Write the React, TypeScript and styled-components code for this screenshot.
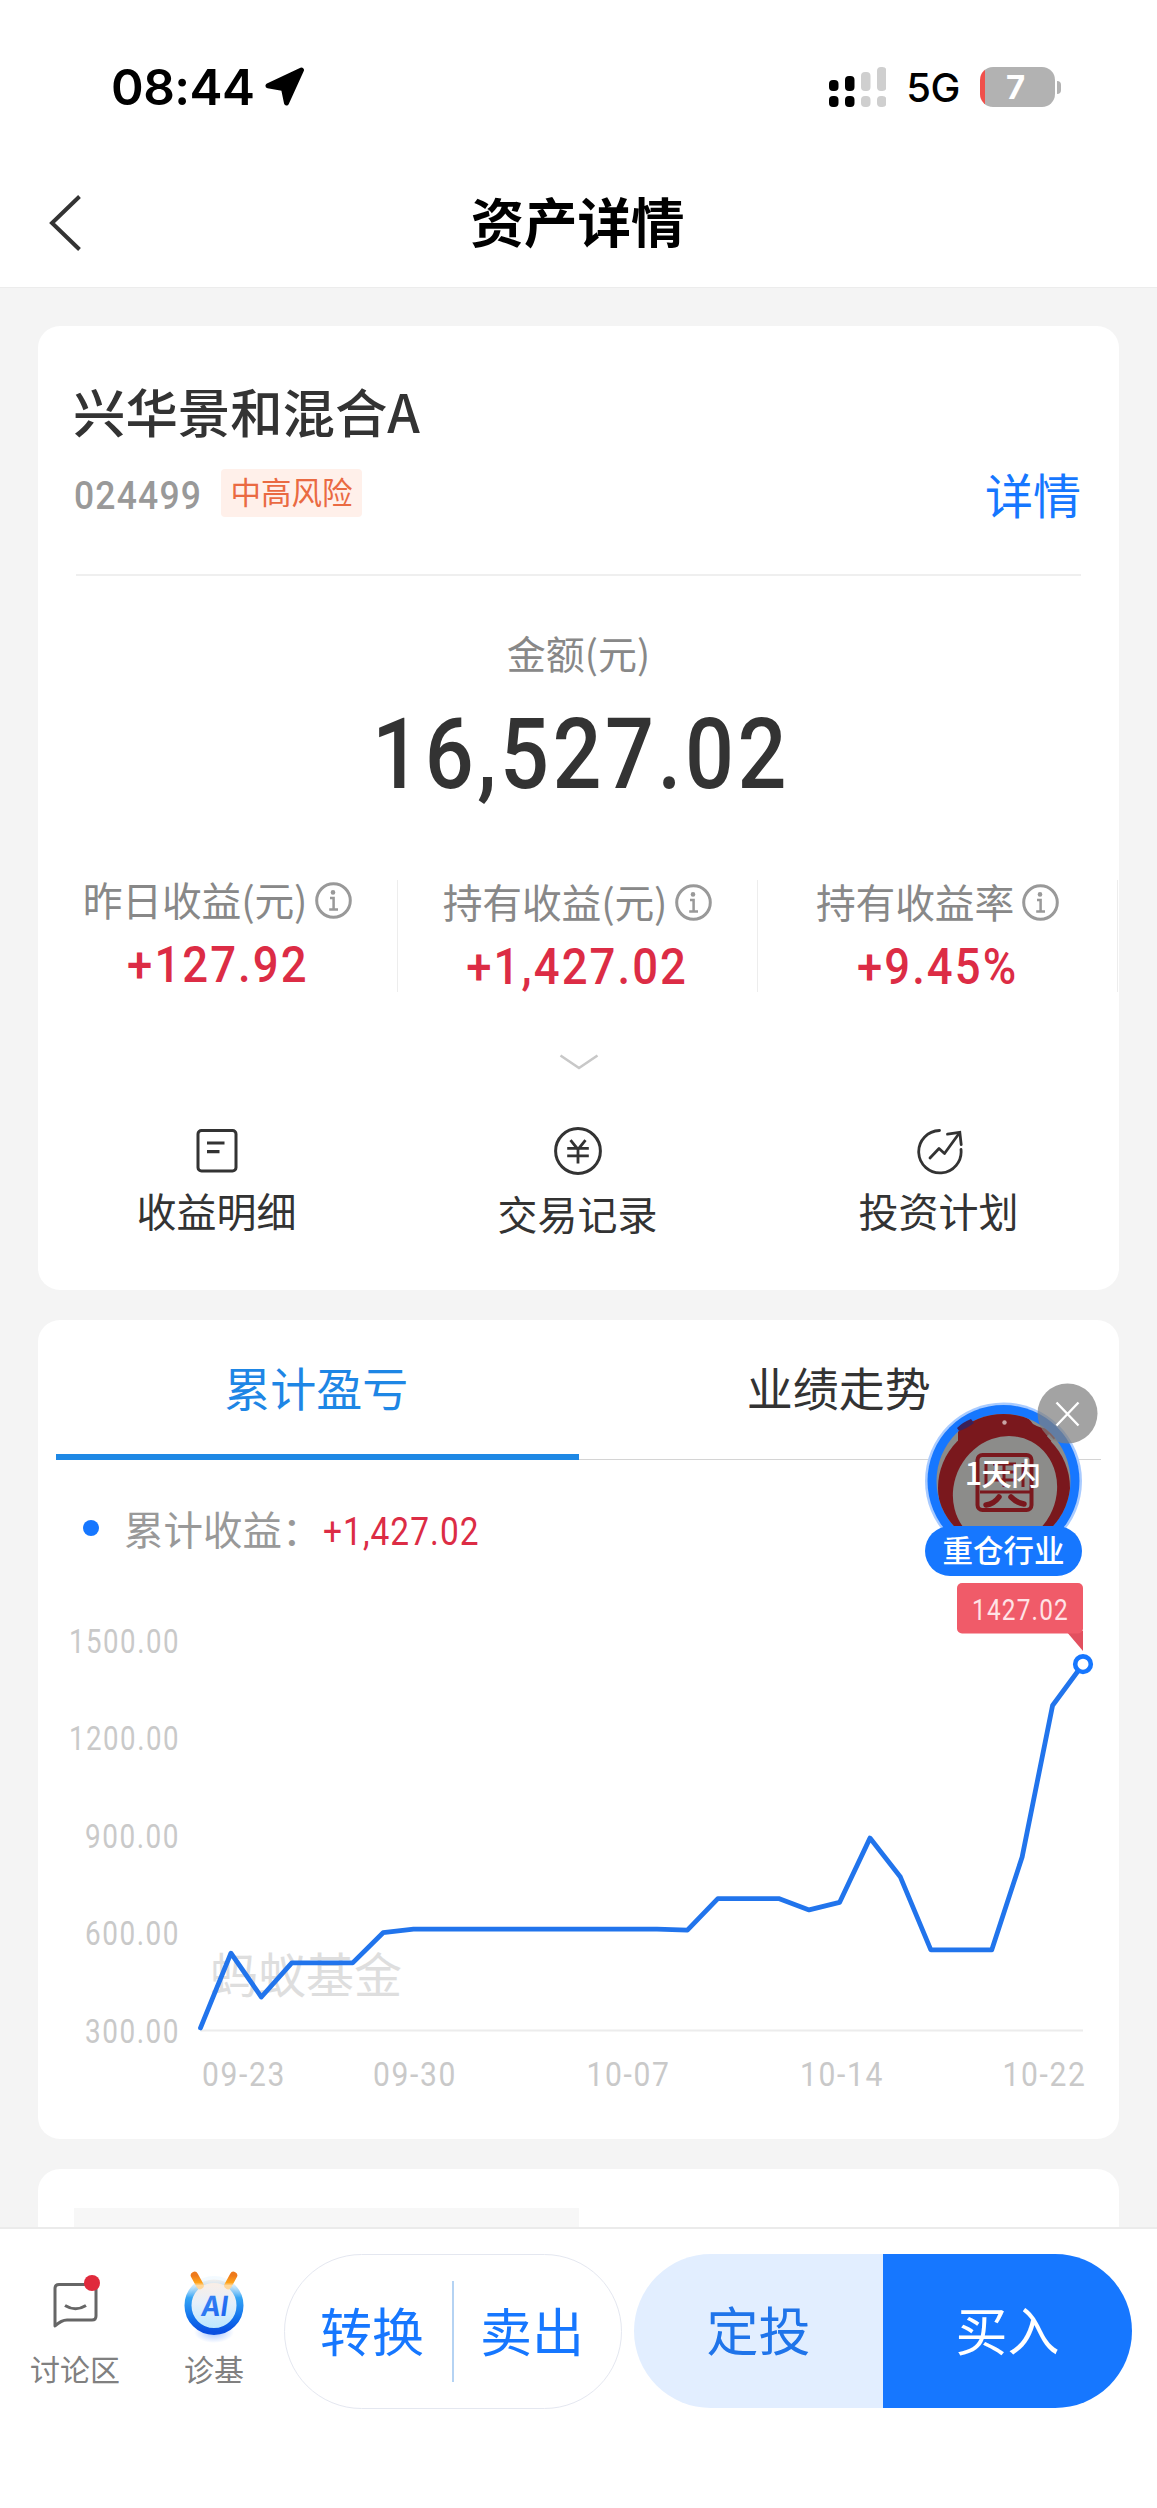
import React from 'react';
import styled, { createGlobalStyle } from 'styled-components';

const CJK = "'Noto Sans CJK SC', 'Noto Sans', sans-serif";
const NUM = "Roboto, 'Noto Sans CJK SC', sans-serif";
const SYS = "Inter, 'Liberation Sans', sans-serif";

const BLUE = '#1677ff';
const RED = '#dc2c45';

const GlobalStyle = createGlobalStyle`
  * { box-sizing: border-box; }
  body { margin: 0; background: #f4f4f4; }
`;

const Page = styled.div`
  position: relative;
  display: flex;
  flex-direction: column;
  width: 1157px;
  height: 2508px;
  overflow: hidden;
  background: #f4f4f4;
  font-family: ${CJK};
  color: #333;
  white-space: nowrap;
`;

/* ---------- header ---------- */

const Header = styled.header`
  flex: none;
  height: 288px;
  background: #fff;
  border-bottom: 1px solid #ececec;
`;

const StatusBar = styled.div`
  display: flex;
  align-items: center;
  justify-content: space-between;
  height: 158px;
  padding: 16px 96px 0 111px;
  font-family: ${SYS};
  color: #000;
`;

const StatusGroup = styled.div<{ $gap: number }>`
  display: flex;
  align-items: center;
  gap: ${p => p.$gap}px;
`;

const Clock = styled.span`
  font-size: 49.5px;
  font-weight: 600;
  line-height: 60px;
  letter-spacing: -0.5px;
`;

const Network = styled.span`
  margin-top: 2px;
  font-size: 40px;
  font-weight: 500;
  line-height: 44px;
  letter-spacing: -0.5px;
`;

const Battery = styled.div`
  display: flex;
  align-items: center;
  gap: 2px;
`;

const BatteryBody = styled.div`
  width: 75px;
  height: 40px;
  border-radius: 13px;
  background: linear-gradient(90deg, #f0504b 0 5px, #b2b2b2 5px);
  color: #fff;
  font-size: 33px;
  font-weight: 700;
  line-height: 41px;
  text-align: center;
  padding-right: 4px;
`;

const BatteryNub = styled.div`
  width: 4px;
  height: 13px;
  border-radius: 0 5px 5px 0;
  background: #b2b2b2;
`;

const NavBar = styled.div`
  display: grid;
  grid-template-columns: 100px 1fr 100px;
  align-items: center;
  height: 129px;
  padding: 0 24px;
`;

const NavTitle = styled.h1`
  margin: -6px 0 0 -2px;
  font-size: 53.5px;
  line-height: 70px;
  font-weight: 600;
  text-align: center;
  color: #000;
`;

const BackIcon = styled.svg`
  display: block;
  margin-left: 22px;
`;

/* ---------- cards ---------- */

const Main = styled.main`
  flex: 1;
  min-height: 0;
  display: flex;
  flex-direction: column;
  gap: 30px;
  padding: 38px 38px 0;
  overflow: hidden;
`;

const Card = styled.section<{ $height: number; $pad: number }>`
  flex: none;
  display: flex;
  flex-direction: column;
  height: ${p => p.$height}px;
  padding: 0 ${p => p.$pad}px;
  border-radius: 22px;
  background: #fff;
`;

const FundHead = styled.div`
  height: 250px;
  padding-top: 52px;
  border-bottom: 2px solid #efefef;
`;

const FundName = styled.h2`
  margin: 0 0 0 -3px;
  font-size: 52.4px;
  line-height: 64px;
  font-weight: 500;
`;

const FundMeta = styled.div`
  display: flex;
  align-items: center;
  height: 56px;
  margin-top: 23px;
`;

const FundCode = styled.span`
  margin: 5px 9px 0 -2px;
  width: 138px;
  font-family: ${NUM};
  font-size: 39px;
  line-height: 48px;
  font-weight: 500;
  letter-spacing: 1.3px;
  color: #999;
  transform: scaleX(0.91);
  transform-origin: left;
`;

const RiskTag = styled.span`
  width: 141px;
  height: 48px;
  border-radius: 4px;
  background: #fff0ea;
  color: #ea6a42;
  font-size: 30.5px;
  line-height: 45px;
  text-align: center;
`;

const DetailLink = styled.a`
  margin-left: auto;
  font-size: 48px;
  line-height: 56px;
  color: ${BLUE};
`;

const Amount = styled.div`
  padding-top: 52px;
  text-align: center;
`;

const AmountLabel = styled.div`
  font-size: 39px;
  line-height: 48px;
  color: #888;
`;

const AmountValue = styled.div`
  margin-top: 29px;
  padding-left: 6px;
  font-family: ${NUM};
  font-size: 98px;
  line-height: 100px;
  font-weight: 500;
  letter-spacing: 4px;
  transform: scaleX(0.88);
`;

const Stats = styled.div`
  display: grid;
  grid-template-columns: repeat(3, 360px);
  height: 109px;
  margin: 75px -38px 0;
`;

const Stat = styled.div<{ $drop?: number }>`
  display: flex;
  flex-direction: column;
  align-items: center;
  padding-top: ${p => p.$drop ?? 0}px;
  border-right: 1px solid #ededed;
`;

const StatLabel = styled.div`
  display: flex;
  align-items: center;
  gap: 8px;
  height: 41px;
  font-size: 39.8px;
  line-height: 40px;
  letter-spacing: -0.2px;
  color: #888;
`;

const StatText = styled.span`
  margin-top: -3px;
`;

const StatValue = styled.div`
  margin-top: 19px;
  font-family: ${NUM};
  font-size: 50.5px;
  line-height: 50px;
  font-weight: 500;
  letter-spacing: 2.3px;
  color: ${RED};
  transform: scaleX(0.9);
`;

const ExpandIcon = styled.svg`
  display: block;
  flex: none;
  align-self: center;
  margin-top: 65px;
`;

const Actions = styled.div`
  display: grid;
  grid-template-columns: repeat(3, 361px);
  margin: 56px -36px 0 -40px;
`;

const Action = styled.div<{ $drop?: number }>`
  display: flex;
  flex-direction: column;
  align-items: center;
  gap: ${p => 15 + (p.$drop ?? 0)}px;
  font-size: 40px;
  line-height: 40px;
`;

/* ---------- profit chart ---------- */

const Tabs = styled.div`
  display: grid;
  grid-template-columns: 1fr 1fr;
  flex: none;
  height: 140px;
`;

const Tab = styled.div<{ $active?: boolean }>`
  padding: 0 2px 6px 0;
  font-size: 46px;
  line-height: 133px;
  text-align: center;
  color: ${p => (p.$active ? '#1e86e5' : '#333')};
  box-shadow: inset 0 ${p => (p.$active ? '-6px #1e88e5' : '-1px #d4d4d4')};
`;

const Legend = styled.div`
  display: flex;
  align-items: center;
  flex: none;
  height: 60px;
  margin: 38px 0 0 27px;
`;

const LegendDot = styled.span`
  width: 16px;
  height: 16px;
  border-radius: 50%;
  background: ${BLUE};
`;

const LegendLabel = styled.span`
  width: 199px;
  margin-left: 25px;
  font-size: 39.5px;
  line-height: 58px;
  color: #999;
`;

const LegendValue = styled.span`
  margin-top: 7px;
  font-family: ${NUM};
  font-size: 38px;
  line-height: 46px;
  letter-spacing: 1.2px;
  color: ${RED};
  transform: scaleX(0.88);
  transform-origin: left;
`;

const ChartSvg = styled.svg`
  display: block;
  flex: none;
  overflow: visible;
`;

const AxisText = styled.text`
  font-family: ${NUM};
  font-size: 33px;
  font-weight: 400;
  letter-spacing: 1.8px;
  fill: #c9c9c9;
`;

const Watermark = styled.text`
  font-family: ${CJK};
  font-size: 48px;
  fill: #dedede;
`;

const TipText = styled.text`
  font-family: ${NUM};
  font-size: 30px;
  letter-spacing: 1.5px;
  fill: #ffe3e6;
`;

const Skeleton = styled.div`
  width: 505px;
  height: 60px;
  margin-top: 39px;
  background: #f7f7f7;
`;

/* ---------- floating badge ---------- */

const Floating = styled.div`
  position: absolute;
  left: 924px;
  top: 1382px;
  width: 176px;
  height: 196px;
`;

const FloatingLogo = styled.svg`
  position: absolute;
  left: 0;
  top: 19px;
`;

const FloatingTime = styled.span`
  position: absolute;
  left: 0;
  top: 70px;
  width: 157px;
  font-size: 30.5px;
  line-height: 40px;
  font-weight: 500;
  letter-spacing: -1px;
  text-align: center;
  color: #fff;
`;

const FloatingLabel = styled.span`
  position: absolute;
  left: 1px;
  top: 144px;
  width: 157px;
  height: 50px;
  border-radius: 25px;
  background: ${BLUE};
  color: #fff;
  font-size: 30.5px;
  line-height: 47px;
  font-weight: 500;
  text-align: center;
`;

const FloatingClose = styled.svg`
  position: absolute;
  left: 113px;
  top: 1px;
`;

/* ---------- footer ---------- */

const Footer = styled.footer`
  display: flex;
  align-items: flex-start;
  flex: none;
  height: 281px;
  padding: 25px 25px 0;
  border-top: 2px solid #ebebeb;
  background: #fff;
`;

const FooterLink = styled.div<{ $width: number; $left?: number }>`
  display: flex;
  flex-direction: column;
  align-items: center;
  flex: none;
  width: ${p => p.$width}px;
  margin: -1px 0 0 ${p => p.$left ?? 0}px;
  font-size: 30px;
  line-height: 28px;
  color: #808080;
`;

const AiText = styled.text`
  font-family: ${SYS};
  font-size: 28px;
  font-weight: 700;
`;

const OutlinePill = styled.div`
  display: flex;
  align-items: center;
  flex: none;
  width: 338px;
  height: 155px;
  margin-left: 40px;
  border: 1.5px solid #e4e7f0;
  border-radius: 78px;
  font-size: 52px;
  line-height: 60px;
  color: ${BLUE};
`;

const OutlineAction = styled.span<{ $left: number; $width: number }>`
  width: ${p => p.$width}px;
  margin: -4px 0 0 ${p => p.$left}px;
`;

const PillDivider = styled.span`
  width: 2px;
  height: 101px;
  background: #b5d3f3;
`;

const SolidPill = styled.div`
  display: grid;
  grid-template-columns: 1fr 1fr;
  flex: none;
  width: 498px;
  height: 154px;
  margin-left: 12px;
  border-radius: 77px;
  overflow: hidden;
`;

const SolidAction = styled.span<{ $primary?: boolean }>`
  padding-bottom: 4px;
  font-size: 52px;
  line-height: 150px;
  text-align: center;
  background: ${p => (p.$primary ? BLUE : '#e2eeff')};
  color: ${p => (p.$primary ? '#fff' : '#1f74ea')};
`;

const SIGNAL = [
  { x: 0, top: 13, color: '#000' },
  { x: 16, top: 9, color: '#000' },
  { x: 32, top: 5, color: '#cfcfcf' },
  { x: 48, top: 0, color: '#cfcfcf' },
];

const SignalIcon = () => (
  <svg width="57" height="40" viewBox="0 0 57 40">
    {SIGNAL.map(s => (
      <g key={s.x} fill={s.color}>
        <rect x={s.x} y={s.top} width="9.500" height={24 - s.top} rx="4" />
        <rect x={s.x} y="29" width="9.500" height="11" rx="4" />
      </g>
    ))}
  </svg>
);

const InfoIcon = () => (
  <svg width="37" height="37" viewBox="0 0 37 37" fill="none" stroke="#999" strokeWidth="3">
    <circle cx="18.5" cy="18.5" r="16.8" />
    <circle cx="18" cy="10.4" r="2.3" fill="#999" stroke="none" />
    <path d="M15 16h3.600v11.500M14.200 27.600h8.800" strokeWidth="2.500" />
  </svg>
);

const DocIcon = () => (
  <svg width="48" height="48" viewBox="0 0 48 48" fill="none" stroke="#333" strokeWidth="3">
    <rect x="5" y="3.500" width="38" height="40.500" rx="3.500" />
    <path d="M14 16h17.500M14 24.700h12.500" strokeWidth="3.200" />
  </svg>
);

const YenIcon = () => (
  <svg width="48" height="48" viewBox="0 0 48 48" fill="none" stroke="#333" strokeWidth="3">
    <circle cx="24" cy="24" r="22.400" />
    <path d="M16.500 13.200l7.500 9.300 7.500-9.300M24 22v14.500M13.200 21.300h21.600M13.200 28.800h21.600" strokeWidth="2.800" />
  </svg>
);

const TrendIcon = () => (
  <svg width="48" height="48" viewBox="0 0 48 48" fill="none" stroke="#333" strokeWidth="2.800" strokeLinecap="round">
    <path d="M24.500 3.500A21.200 21.200 0 1 0 46 22.500" />
    <path d="M15 31l9-9.500 5.500 5L44 6.500" strokeLinejoin="round" />
    <path d="M32.500 7.200L44.800 5.300 46.200 17.600" strokeLinejoin="miter" />
  </svg>
);

const DiscussIcon = () => (
  <svg width="100" height="101" viewBox="0 0 100 101" fill="none">
    <path
      d="M30 72.500V35.500q0-4 4-4h33q4 0 4 4v27.500q0 4-4 4H42q-5.500 0-12 6z"
      stroke="#666"
      strokeWidth="3"
      strokeLinejoin="round"
    />
    <path d="M40 52.500q10.500 6.500 21 0" stroke="#666" strokeWidth="3" />
    <circle cx="67" cy="30" r="8" fill="#e02a3c" />
  </svg>
);

const AiIcon = () => (
  <svg width="60" height="101" viewBox="0 0 60 101" fill="none">
    <defs>
      <linearGradient id="aiRing" x1="0" y1="0" x2="0" y2="1">
        <stop offset="0" stopColor="#d8efff" stopOpacity="0.3" />
        <stop offset="0.35" stopColor="#35a5f5" />
        <stop offset="0.75" stopColor="#1170ec" />
        <stop offset="1" stopColor="#0a4fe0" />
      </linearGradient>
      <linearGradient id="aiFace" x1="0" y1="0" x2="0" y2="1">
        <stop offset="0" stopColor="#fdeee2" />
        <stop offset="0.45" stopColor="#e6effa" />
        <stop offset="1" stopColor="#b5e6ff" />
      </linearGradient>
      <linearGradient id="aiHorn" x1="0" y1="0" x2="0" y2="1">
        <stop offset="0" stopColor="#ee7a1c" />
        <stop offset="0.7" stopColor="#ffa31a" />
        <stop offset="1" stopColor="#ffd79a" />
      </linearGradient>
      <linearGradient id="aiGlyph" x1="0" y1="0" x2="1" y2="1">
        <stop offset="0" stopColor="#3b8cf5" />
        <stop offset="1" stopColor="#1a5ff0" />
      </linearGradient>
      <radialGradient id="aiGlow">
        <stop offset="0" stopColor="#8db4ff" stopOpacity="0.8" />
        <stop offset="1" stopColor="#8db4ff" stopOpacity="0" />
      </radialGradient>
    </defs>
    <ellipse cx="30" cy="79" rx="20" ry="11" fill="url(#aiGlow)" />
    <circle cx="30" cy="52.500" r="26" fill="url(#aiFace)" stroke="url(#aiRing)" strokeWidth="7" />
    <path d="M10.500 22.500l5.500 10" stroke="url(#aiHorn)" strokeWidth="7.500" strokeLinecap="round" />
    <path d="M49.500 22.500l-5.500 10" stroke="url(#aiHorn)" strokeWidth="7.500" strokeLinecap="round" />
    <AiText
      x="-13.500"
      y="0"
      fill="url(#aiGlyph)"
      textLength="27"
      lengthAdjust="spacingAndGlyphs"
      transform="translate(29.500 63) skewX(-8)"
    >
      AI
    </AiText>
  </svg>
);

/* Cumulative profit per day, 09-22 to 10-22 */
const PROFIT = [
  308, 538, 403, 508, 508, 508, 601, 612, 612, 612, 612, 612, 612, 612, 612, 612, 609, 706, 706, 706,
  671, 694, 892, 772, 548, 548, 548, 834, 1300, 1427.02,
];
const Y_TICKS = [1500, 1200, 900, 600, 300];
const X_TICKS = [
  { label: '09-23', x: 146 },
  { label: '09-30', x: 317 },
  { label: '10-07', x: 530.5 },
  { label: '10-14', x: 744 },
  { label: '10-22', x: 946.5 },
];
const PLOT = { left: 144.5, right: 1027, base: 472.5, step: 97.5 };
const px = (i: number) => PLOT.left + ((PLOT.right - PLOT.left) * i) / (PROFIT.length - 1);
const py = (v: number) => PLOT.base - ((v - 300) / 300) * PLOT.step;

const ProfitChart = () => {
  const line = PROFIT.map((v, i) => `${px(i)},${py(v)}`).join(' ');
  const endX = px(PROFIT.length - 1);
  const endY = py(PROFIT[PROFIT.length - 1]);
  return (
    <ChartSvg width="1043" height="560" viewBox="0 0 1043 560">
      {Y_TICKS.map(v => (
        <AxisText
          key={v}
          x="124"
          y={py(v) + 12}
          textAnchor="end"
          textLength={v >= 1000 ? 111 : 95}
          lengthAdjust="spacingAndGlyphs"
        >
          {v.toFixed(2)}
        </AxisText>
      ))}
      <Watermark x="154" y="435">蚂蚁基金</Watermark>
      <path d={`M${PLOT.left} ${PLOT.base}H${PLOT.right}`} stroke="#ececec" strokeWidth="2" />
      {X_TICKS.map(t => (
        <AxisText key={t.label} x={t.x} y="528" textLength="84" lengthAdjust="spacingAndGlyphs">
          {t.label}
        </AxisText>
      ))}
      <polyline points={line} fill="none" stroke="#2174ec" strokeWidth="4.800" strokeLinejoin="round" strokeLinecap="round" />
      <circle cx={endX} cy={endY} r="7.800" fill="#fff" stroke={BLUE} strokeWidth="4.600" />
      <path d="M1010 73H1027V93z" fill="#e2505f" />
      <rect x="901" y="25" width="126" height="50.500" rx="5" fill="#f05b69" />
      <TipText x="916" y="62" textLength="97" lengthAdjust="spacingAndGlyphs">1427.02</TipText>
    </ChartSvg>
  );
};

const FundLogo = () => (
  <FloatingLogo width="159" height="159" viewBox="0 0 159 159" fill="none">
    <defs>
      <clipPath id="logoFace">
        <circle cx="79.500" cy="80" r="67" />
      </clipPath>
    </defs>
    <circle cx="79.500" cy="80" r="78.500" fill="#a9cbff" />
    <circle cx="79.500" cy="80" r="76" fill={BLUE} />
    <g clipPath="url(#logoFace)">
      <rect width="159" height="159" fill="#8c8c8a" />
      <circle cx="80" cy="87" r="66" fill="#7a181d" />
      <path d="M34 18q45-18 74-1 8 8 22 8l-8-20L79-2z" fill="#8c8c8a" />
      <path d="M34 22Q60 8 92 13q12 2 17 10 10 6 22 4l3 8-13 10Q75 20 34 60z" fill="#7a181d" />
      <ellipse cx="81" cy="90" rx="51" ry="56" transform="rotate(28 81 90)" fill="#8c8c8a" />
      <path d="M124 34l8 9" stroke="#8c8c8a" strokeWidth="3" />
    </g>
    <path d="M33 27q6-6 14-9l3 4q-8 6-15 8z" fill="#3b2058" />
    <circle cx="80.500" cy="21.500" r="2.200" fill="#c9a5a5" />
    <g stroke="#7a181d" strokeWidth="4" strokeLinejoin="round">
      <rect x="53.500" y="54" width="54" height="55" rx="5" />
      <path d="M62 62v24M99 62v24M69 63h23M69 71h23M69 79h23M80 62v24M56 91h50" strokeWidth="3" />
      <path d="M75 96q-5 7-13 8M87 96q6 6 13 7" strokeWidth="5.500" strokeLinecap="round" />
    </g>
  </FloatingLogo>
);

export default function App() {
  return (
    <>
      <GlobalStyle />
      <Page>
        <Header>
          <StatusBar>
            <StatusGroup $gap={10}>
              <Clock>08:44</Clock>
              <svg width="40" height="40" viewBox="0 0 40 40">
                <path
                  d="M36.500 3L21.500 36 18.500 21.500 3 18.700z"
                  fill="#000"
                  stroke="#000"
                  strokeWidth="5"
                  strokeLinejoin="round"
                />
              </svg>
            </StatusGroup>
            <StatusGroup $gap={20}>
              <SignalIcon />
              <Network>5G</Network>
              <Battery>
                <BatteryBody>7</BatteryBody>
                <BatteryNub />
              </Battery>
            </StatusGroup>
          </StatusBar>
          <NavBar>
            <BackIcon width="36" height="56" viewBox="0 0 36 56" fill="none" stroke="#333" strokeWidth="4">
              <path d="M33.500 1.500L6 28l27.500 26.500" />
            </BackIcon>
            <NavTitle>资产详情</NavTitle>
          </NavBar>
        </Header>

        <Main>
          <Card $height={964} $pad={38}>
            <FundHead>
              <FundName>兴华景和混合A</FundName>
              <FundMeta>
                <FundCode>024499</FundCode>
                <RiskTag>中高风险</RiskTag>
                <DetailLink>详情</DetailLink>
              </FundMeta>
            </FundHead>

            <Amount>
              <AmountLabel>金额(元)</AmountLabel>
              <AmountValue>16,527.02</AmountValue>
            </Amount>

            <Stats>
              <Stat>
                <StatLabel>
                  <StatText>昨日收益(元)</StatText>
                  <InfoIcon />
                </StatLabel>
                <StatValue>+127.92</StatValue>
              </Stat>
              <Stat $drop={2}>
                <StatLabel>
                  <StatText>持有收益(元)</StatText>
                  <InfoIcon />
                </StatLabel>
                <StatValue>+1,427.02</StatValue>
              </Stat>
              <Stat $drop={2}>
                <StatLabel>
                  <StatText>持有收益率</StatText>
                  <InfoIcon />
                </StatLabel>
                <StatValue>+9.45%</StatValue>
              </Stat>
            </Stats>

            <ExpandIcon width="40" height="17" viewBox="0 0 40 17" fill="none" stroke="#c8c8c8" strokeWidth="2.600">
              <path d="M1.500 1.500L20 14 38.500 1.500" />
            </ExpandIcon>

            <Actions>
              <Action>
                <DocIcon />
                收益明细
              </Action>
              <Action $drop={3}>
                <YenIcon />
                交易记录
              </Action>
              <Action>
                <TrendIcon />
                投资计划
              </Action>
            </Actions>
          </Card>

          <Card $height={819} $pad={18}>
            <Tabs>
              <Tab $active>累计盈亏</Tab>
              <Tab>业绩走势</Tab>
            </Tabs>
            <Legend>
              <LegendDot />
              <LegendLabel>累计收益：</LegendLabel>
              <LegendValue>+1,427.02</LegendValue>
            </Legend>
            <ProfitChart />
          </Card>

          <Card $height={200} $pad={36}>
            <Skeleton />
          </Card>
        </Main>

        <Footer>
          <FooterLink $width={100}>
            <DiscussIcon />
            讨论区
          </FooterLink>
          <FooterLink $width={60} $left={59}>
            <AiIcon />
            诊基
          </FooterLink>
          <OutlinePill>
            <OutlineAction $left={35} $width={132}>转换</OutlineAction>
            <PillDivider />
            <OutlineAction $left={26} $width={104}>卖出</OutlineAction>
          </OutlinePill>
          <SolidPill>
            <SolidAction>定投</SolidAction>
            <SolidAction $primary>买入</SolidAction>
          </SolidPill>
        </Footer>

        <Floating>
          <FundLogo />
          <FloatingTime>1天内</FloatingTime>
          <FloatingLabel>重仓行业</FloatingLabel>
          <FloatingClose width="61" height="61" viewBox="0 0 61 61" fill="none">
            <circle cx="30.500" cy="30.500" r="30" fill="#808080" fillOpacity="0.72" />
            <path d="M19.500 19.500l22 23M41.500 19.500l-22 23" stroke="#fff" strokeWidth="2.400" />
          </FloatingClose>
        </Floating>
      </Page>
    </>
  );
}
